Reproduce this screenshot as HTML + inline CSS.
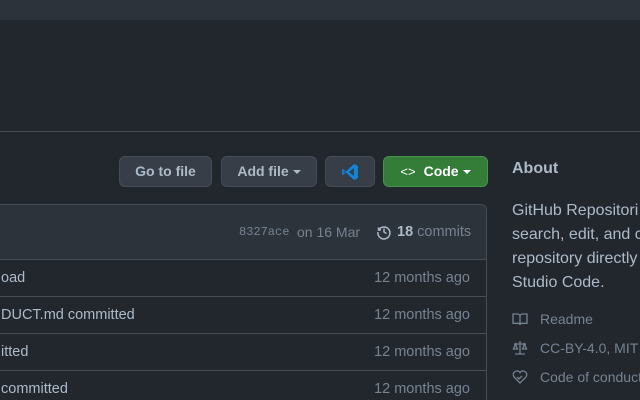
<html><head><style>
html,body{margin:0;width:640px;height:400px;overflow:hidden}
body{background:#22272e;font-family:"Liberation Sans",sans-serif;position:relative;color:#adbac7}
.top{position:absolute;left:0;top:0;width:640px;height:20px;background:#2d333b}
.hr{position:absolute;left:0;top:131px;width:640px;height:1px;background:#444c56}
.btn{position:absolute;top:156px;height:31px;border:1px solid #444c56;background:#373e47;border-radius:6px;box-sizing:border-box;font-size:14px;font-weight:bold;color:#adbac7;line-height:29px;text-align:center}
.caret{display:inline-block;border-left:4px solid transparent;border-right:4px solid transparent;border-top:4px solid currentColor;vertical-align:middle;margin-left:4px}
.box{position:absolute;left:-10px;top:204px;width:497px;height:196px;border:1px solid #444c56;border-bottom:none;border-radius:6px 6px 0 0;box-sizing:border-box;overflow:hidden}
.hd{position:absolute;left:0;top:0;right:0;height:54px;background:#2d333b;border-radius:6px 6px 0 0;border-bottom:1px solid #444c56}
.row{position:absolute;left:0;right:0;height:37px;border-top:1px solid #444c56;font-size:14.5px;line-height:36px}
.row .l{position:absolute;left:10px}.row .r{position:absolute;right:16px;color:#768390}
.ab{position:absolute;left:512px;font-size:16px;color:#adbac7}
.li{position:absolute;left:512px;font-size:14px;color:#768390}
.li span{position:absolute;left:28px;white-space:nowrap}
</style></head><body>
<div class="top"></div><div class="hr"></div>
<div class="btn" style="left:119px;width:93px">Go to file</div>
<div class="btn" style="left:221px;width:96px">Add file<span class="caret"></span></div>
<div class="btn" style="left:325px;width:50px"><svg width="18" height="18" viewBox="0 0 16 16" style="margin-top:6px"><path d="M11.5 1 L15 2.6 V13.4 L11.5 15 L4.5 8.6 L1.8 10.7 L1 10.2 V5.8 L1.8 5.3 L4.5 7.4 Z M11.5 4.6 L7 8 L11.5 11.4 Z M2.4 6.6 V9.4 L3.8 8 Z" fill="#0f86d8"/></svg></div>
<div class="btn" style="left:383px;width:105px;background:#347d39;border-color:#46954a;color:#fff"><span style="font-weight:normal;font-size:13px;margin-right:8px">&lt;&gt;</span>Code<span class="caret"></span></div>
<div class="box"><div class="hd"><span style="position:absolute;left:248px;top:20px;font-family:'Liberation Mono',monospace;font-size:12px;color:#768390">8327ace</span><span style="position:absolute;left:306px;top:19px;font-size:14px;color:#768390">on 16 Mar</span>
<svg style="position:absolute;left:385px;top:19px" width="16" height="16" viewBox="0 0 16 16" fill="none" stroke="#adbac7" stroke-width="1.5"><path d="M2.5 3.5 V6 H5"/><path d="M2.7 6 A6 6 0 1 1 2 8"/><path d="M8 4.5 V8 L10.5 9.5"/></svg>
<span style="position:absolute;left:406px;top:19px;font-size:14.5px;color:#768390"><b style="color:#adbac7">18</b> commits</span></div>
<div class="row" style="top:54px"><span class="l">oad</span><span class="r">12 months ago</span></div>
<div class="row" style="top:91px"><span class="l">DUCT.md committed</span><span class="r">12 months ago</span></div>
<div class="row" style="top:128px"><span class="l">itted</span><span class="r">12 months ago</span></div>
<div class="row" style="top:165px;height:30px"><span class="l">committed</span><span class="r">12 months ago</span></div>
</div>
<div class="ab" style="top:160px;font-weight:bold">About</div>
<div class="ab" style="top:199px;line-height:24px;white-space:nowrap">GitHub Repositori<br>search, edit, and c<br>repository directly<br>Studio Code.</div>
<div class="li" style="top:311px"><svg width="16" height="16" viewBox="0 0 16 16" fill="none" stroke="#768390" stroke-width="1.3"><path d="M1 3h4.5c1.4 0 2.5 1 2.5 2.3V14c0-1-1-1.7-2.2-1.7H1zM15 3h-4.5C9.1 3 8 4 8 5.3V14c0-1 1-1.7 2.2-1.7H15z"/></svg><span>Readme</span></div>
<div class="li" style="top:340px"><svg width="16" height="16" viewBox="0 0 16 16" fill="none" stroke="#768390" stroke-width="1.3"><path d="M8 1v13M3 14h10M2 4h12M3.5 4l-2 5h4zM12.5 4l-2 5h4z"/></svg><span>CC-BY-4.0, MIT</span></div>
<div class="li" style="top:369px"><svg width="16" height="16" viewBox="0 0 16 16" fill="none" stroke="#768390" stroke-width="1.3"><path d="M8 14 L2 8 A3.3 3.3 0 0 1 8 3.5 A3.3 3.3 0 0 1 14 8 Z M5 8l2 2 3-3"/></svg><span>Code of conduct</span></div>
</body></html>
